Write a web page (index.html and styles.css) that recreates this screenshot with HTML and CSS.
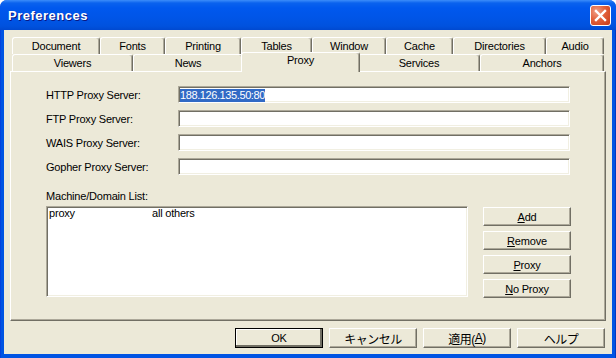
FILE: index.html
```html
<!DOCTYPE html>
<html lang="ja">
<head>
    <meta charset="UTF-8">
    <title>Preferences</title>
    <link rel="stylesheet" href="styles.css">
</head>
<body>
    <div class="window">
        <div class="titlebar">
            <span class="title">Preferences</span>
            <div class="close-btn">
                <svg width="19" height="19" viewBox="0 0 19 19">
                    <path d="M5 5 L14 14 M14 5 L5 14" stroke="#fff" stroke-width="2.4" stroke-linecap="square"/>
                </svg>
            </div>
        </div>

        <div class="client">
            <div class="tabs">
                <div class="tab-row">
                    <div class="tab tab-document">Document</div>
                    <div class="tab tab-fonts">Fonts</div>
                    <div class="tab tab-printing">Printing</div>
                    <div class="tab tab-tables">Tables</div>
                    <div class="tab tab-window">Window</div>
                    <div class="tab tab-cache">Cache</div>
                    <div class="tab tab-directories">Directories</div>
                    <div class="tab tab-audio">Audio</div>
                </div>
                <div class="tab-row">
                    <div class="tab tab-viewers">Viewers</div>
                    <div class="tab tab-news">News</div>
                    <div class="tab tab-proxy active">Proxy</div>
                    <div class="tab tab-services">Services</div>
                    <div class="tab tab-anchors">Anchors</div>
                </div>
            </div>

            <div class="panel">
                <div class="proxy-form">
                    <label class="field-label">HTTP Proxy Server:</label>
                    <div class="field"><span class="selected">188.126.135.50:80</span></div>
                    <label class="field-label">FTP Proxy Server:</label>
                    <div class="field"></div>
                    <label class="field-label">WAIS Proxy Server:</label>
                    <div class="field"></div>
                    <label class="field-label">Gopher Proxy Server:</label>
                    <div class="field"></div>
                </div>

                <div class="list-label">Machine/Domain List:</div>
                <div class="list-section">
                    <div class="listbox">
                        <div class="list-item">
                            <span class="col-host">proxy</span>
                            <span class="col-target">all others</span>
                        </div>
                    </div>
                    <div class="list-buttons">
                        <div class="btn"><u>A</u>dd</div>
                        <div class="btn"><u>R</u>emove</div>
                        <div class="btn"><u>P</u>roxy</div>
                        <div class="btn"><u>N</u>o Proxy</div>
                    </div>
                </div>
            </div>

            <div class="dialog-buttons">
                <div class="btn btn-default">OK</div>
                <div class="btn jp">キャンセル</div>
                <div class="btn jp">適用(<u>A</u>)</div>
                <div class="btn jp">ヘルプ</div>
            </div>
        </div>
    </div>
</body>
</html>
```

FILE: styles.css
```css
* {
    margin: 0;
    padding: 0;
    box-sizing: border-box;
}

:root {
    --face: #ece9d8;
    --shadow: #aca899;
    --dark-shadow: #716f64;
    --light: #f1efe2;
    --highlight: #ffffff;
    --select: #316ac5;
    --ui-font: 'Liberation Sans', 'Noto Sans CJK JP', sans-serif;
}

body {
    width: 616px;
    height: 358px;
    background: #ffffff;
    font-family: var(--ui-font);
    font-size: 11px;
    letter-spacing: -0.2px;
    color: #000;
    overflow: hidden;
}

.window {
    width: 616px;
    height: 358px;
    display: flex;
    flex-direction: column;
    border-radius: 7px 7px 0 0;
    background: linear-gradient(to right, #0831d9 0, #0054e3 1px, #0054e3 615px, #001ea0 616px);
    overflow: hidden;
}

.titlebar {
    height: 30px;
    flex: none;
    display: flex;
    align-items: center;
    justify-content: space-between;
    padding: 0 5px 0 8px;
    background: linear-gradient(to bottom, #3c8dfa 0, #0a62ee 3px, #0058ee 8px, #0055e7 18px, #0052de 26px, #0049d0 30px);
}

.title {
    color: #fff;
    font-size: 13px;
    font-weight: bold;
    letter-spacing: 0.5px;
    text-shadow: 1px 1px #0a1883;
    padding-top: 1px;
}

.close-btn {
    width: 21px;
    height: 21px;
    margin-top: 1px;
    border: 1px solid #fff;
    border-radius: 3px;
    background: radial-gradient(circle at 30% 30%, #f0a088 0, #e2613b 45%, #c73a17 100%);
    display: flex;
    align-items: center;
    justify-content: center;
}

.client {
    flex: 1;
    margin: 0 4px 4px;
    background: var(--face);
    padding: 7px 6px 0 6px;
    display: flex;
    flex-direction: column;
}

/* tabs */
.tabs {
    padding: 0 2px;
}

.tab-row {
    display: flex;
    height: 17px;
}

.tab {
    height: 17px;
    border: 1px solid;
    border-color: var(--highlight) var(--dark-shadow) transparent var(--highlight);
    border-bottom: none;
    border-radius: 3px 3px 0 0;
    box-shadow: inset -1px 0 var(--shadow);
    text-align: center;
    line-height: 16px;
    background: var(--face);
}

.tab-document { width: 88px; }
.tab-fonts { width: 65px; }
.tab-printing { width: 76px; }
.tab-tables { width: 71px; }
.tab-window { width: 74px; }
.tab-cache { width: 67px; }
.tab-directories { width: 93px; }
.tab-audio { width: 58px; }

.tab-viewers { width: 121px; }
.tab-news { width: 110px; }
.tab-proxy { width: 115px; }
.tab-services { width: 122px; }
.tab-anchors { width: 124px; }

.tab.active {
    position: relative;
    z-index: 1;
    width: 119px;
    height: 20px;
    margin: -2px -2px -1px;
    line-height: 15px;
}

/* panel */
.panel {
    height: 250px;
    border: 1px solid;
    border-color: var(--highlight) var(--dark-shadow) var(--dark-shadow) var(--highlight);
    box-shadow: inset -1px -1px var(--shadow);
    padding: 14px 0 0 35px;
}

.proxy-form {
    display: grid;
    grid-template-columns: 132px 392px;
    grid-auto-rows: 17px;
    row-gap: 7px;
    align-items: center;
}

.field-label {
    padding-top: 1px;
}

.field {
    height: 17px;
    background: #fff;
    border: 1px solid;
    border-color: var(--shadow) var(--highlight) var(--highlight) var(--shadow);
    box-shadow: inset 1px 1px var(--dark-shadow), inset -1px -1px var(--light);
    padding: 2px 0 0 1px;
    line-height: 13px;
    white-space: nowrap;
}

.selected {
    background: var(--select);
    color: #fff;
    display: inline-block;
    letter-spacing: -0.4px;
}

.list-label {
    margin-top: 15px;
    height: 16px;
}

.list-section {
    display: flex;
    gap: 15px;
}

.listbox {
    width: 422px;
    height: 91px;
    background: #fff;
    border: 1px solid;
    border-color: var(--shadow) var(--highlight) var(--highlight) var(--shadow);
    box-shadow: inset 1px 1px var(--dark-shadow), inset -1px -1px var(--light);
    padding: 0 2px;
}

.list-item {
    display: flex;
    line-height: 13px;
}

.col-host {
    width: 103px;
}

.list-buttons {
    display: flex;
    flex-direction: column;
    gap: 5px;
    padding-top: 1px;
}

/* buttons */
.btn {
    width: 88px;
    height: 19px;
    display: flex;
    align-items: center;
    justify-content: center;
    background: var(--face);
    border: 1px solid;
    border-color: var(--highlight) var(--dark-shadow) var(--dark-shadow) var(--highlight);
    box-shadow: inset -1px -1px var(--shadow);
}

.dialog-buttons {
    display: flex;
    justify-content: flex-end;
    gap: 6px;
    padding: 7px 1px 0 0;
}

.dialog-buttons .btn {
    height: 20px;
}

.btn-default {
    outline: 1px solid #000;
    outline-offset: -1px;
    box-shadow: inset -2px -2px var(--dark-shadow), inset 1px 1px var(--highlight);
}

.jp {
    font-size: 12px;
    letter-spacing: -0.5px;
}
```
